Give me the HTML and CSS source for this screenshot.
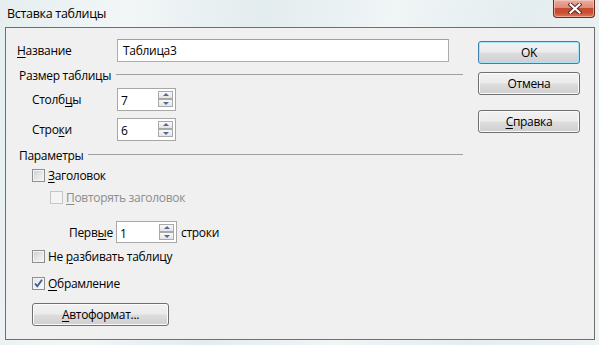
FILE: index.html
```html
<!DOCTYPE html>
<html lang="ru">
<head>
<meta charset="utf-8">
<title>Вставка таблицы</title>
<link rel="stylesheet" href="styles.css">
</head>
<body>
<div class="window">
  <div class="titlebar">
    <span class="title">Вставка таблицы</span>
    <div class="close">
      <svg width="14" height="11" viewBox="0 0 14 11">
        <path d="M2.5 1.5 L11.5 9.5 M11.5 1.5 L2.5 9.5" stroke="#4a2a22" stroke-width="4" stroke-linecap="square" fill="none"/>
        <path d="M2.5 1.5 L11.5 9.5 M11.5 1.5 L2.5 9.5" stroke="#ffffff" stroke-width="2.2" stroke-linecap="square" fill="none"/>
      </svg>
    </div>
  </div>
  <div class="client">
    <div class="main">
      <div class="row name-row">
        <span class="lbl name-lbl"><u>Н</u>азвание</span>
        <div class="textbox">Таблица3</div>
      </div>
      <div class="group-head gh1"><span>Размер таблицы</span><i class="line"></i></div>
      <div class="row spin-row sr1">
        <span class="lbl spin-lbl">Столб<u>ц</u>ы</span>
        <div class="spin"><span class="val">7</span><span class="arrows"><span class="arr up"></span><span class="arr down"></span></span></div>
      </div>
      <div class="row spin-row sr2">
        <span class="lbl spin-lbl">Стро<u>к</u>и</span>
        <div class="spin"><span class="val">6</span><span class="arrows"><span class="arr up"></span><span class="arr down"></span></span></div>
      </div>
      <div class="group-head gh2"><span>Параметры</span><i class="line"></i></div>
      <div class="row check-row cr1">
        <span class="box"></span><span><u>З</u>аголовок</span>
      </div>
      <div class="row check-row cr2 disabled">
        <span class="box"></span><span><u>П</u>овторять заголовок</span>
      </div>
      <div class="row first-row">
        <span class="lbl first-lbl">Перв<u>ы</u>е</span>
        <div class="spin spin-small"><span class="val">1</span><span class="arrows"><span class="arr up"></span><span class="arr down"></span></span></div>
        <span class="lbl">строки</span>
      </div>
      <div class="row check-row cr3">
        <span class="box"></span><span>Не <u>р</u>азбивать таблицу</span>
      </div>
      <div class="row check-row cr4">
        <span class="box checked">
          <svg width="11" height="11" viewBox="0 0 11 11"><path d="M2 5.5 L4.3 8.2 L9 1.8" stroke="#3e5a96" stroke-width="1.8" fill="none"/></svg>
        </span><span><u>О</u>брамление</span>
      </div>
      <div class="btn autofmt"><u>А</u>втоформат...</div>
    </div>
    <div class="buttons">
      <div class="btn default">OK</div>
      <div class="btn cancel">Отмена</div>
      <div class="btn help"><u>С</u>правка</div>
    </div>
  </div>
</div>
</body>
</html>
```

FILE: styles.css
```css
* { box-sizing: border-box; }
html, body {
  margin: 0;
  padding: 0;
  width: 599px;
  height: 345px;
  overflow: hidden;
}
body {
  font-family: "Open Sans", "Noto Sans", sans-serif;
  font-size: 12px;
  letter-spacing: -0.3px;
  color: #000;
  background: linear-gradient(100deg, #e6eef0 0%, #f2f6f7 20%, #e3ecee 40%, #f0f5f6 60%, #e4edef 80%, #eef3f4 100%);
}
.window {
  width: 599px;
  height: 345px;
  display: flex;
  flex-direction: column;
}
.titlebar {
  height: 27px;
  display: flex;
  justify-content: space-between;
  align-items: flex-start;
  padding-left: 7px;
  padding-right: 4px;
}
.title {
  margin-top: 6px;
  line-height: 16px;
  font-size: 12.5px;
  color: #000;
}
.close {
  width: 42px;
  height: 18px;
  border: 1px solid #6b2d22;
  border-top: none;
  border-radius: 0 0 4px 4px;
  background: linear-gradient(#e9ad9f 0%, #dd8c78 45%, #c64a32 50%, #c94f34 75%, #e07a58 100%);
  box-shadow: inset 0 0 0 1px rgba(255, 220, 210, 0.5);
  display: flex;
  align-items: center;
  justify-content: center;
  padding-left: 2px;
}
.close svg { display: block; }
.client {
  margin: 0 4px 0 5px;
  height: 313px;
  border: 1px solid #6f6f6f;
  background: #f0f0f0;
  display: flex;
  padding: 11px 14px 0 11px;
}
.main {
  width: 446px;
  display: flex;
  flex-direction: column;
}
.row {
  display: flex;
  align-items: center;
}
.lbl { white-space: nowrap; }
u { text-decoration: underline; text-underline-offset: 2px; text-decoration-thickness: 1px; }
.name-row { height: 23px; }
.name-lbl { width: 100px; }
.textbox {
  width: 332px;
  height: 23px;
  border: 1px solid #abadb3;
  border-top-color: #a0a0a0;
  background: #fff;
  padding-left: 5px;
  display: flex;
  align-items: center;
}
.group-head {
  height: 16px;
  display: flex;
  align-items: center;
  padding-left: 2px;
}
.group-head .line {
  flex: 1;
  height: 1px;
  margin-left: 5px;
  margin-top: -1px;
  background: #a0a0a0;
}
.gh1 { margin-top: 5px; }
.gh2 { margin-top: 6px; }
.spin-row { height: 23px; padding-left: 15px; }
.sr1 { margin-top: 5px; }
.sr2 { margin-top: 7px; }
.spin-lbl { width: 85px; }
.spin {
  width: 59px;
  height: 23px;
  border: 1px solid #a7a7a7;
  background: #fff;
  display: flex;
  align-items: flex-start;
  justify-content: space-between;
  padding: 2px 2px 0 3px;
}
.spin .val { line-height: 17px; margin-top: 1px; }
.arrows {
  display: flex;
  flex-direction: column;
  width: 15px;
}
.arr {
  display: block;
  height: 8px;
  border: 1px solid #a9a9a9;
  background: linear-gradient(#fafafa, #e4e4e4);
  position: relative;
}
.arr::after {
  content: "";
  position: absolute;
  left: 4px;
  width: 0;
  height: 0;
  border-left: 3px solid transparent;
  border-right: 3px solid transparent;
}
.arr.up::after { top: 1px; border-bottom: 3px solid #4e6a9c; }
.arr.down::after { top: 2px; border-top: 3px solid #4e6a9c; }
.check-row { height: 16px; padding-left: 15px; }
.box {
  width: 13px;
  height: 13px;
  border: 1px solid #8e8f8f;
  background: linear-gradient(135deg, #c9cdd2 0%, #e6e7e9 55%, #f7f7f7 100%);
  box-shadow: inset 0 0 0 1px #f4f4f4;
  margin-right: 3px;
  display: flex;
  align-items: center;
  justify-content: center;
  flex: none;
}
.box.checked { background: linear-gradient(135deg, #dfe3e8 0%, #f2f3f4 60%, #fbfbfb 100%); }
.box svg { display: block; }
.cr1 { margin-top: 4px; }
.cr2 { margin-top: 6px; padding-left: 33px; }
.disabled { color: #8d8d8d; }
.disabled .box { border-color: #c6c6c6; background: #f4f4f4; box-shadow: none; }
.first-row { margin-top: 16px; height: 22px; padding-left: 52px; }
.first-lbl { width: 47px; }
.spin-small { width: 61px; height: 22px; margin-right: 4px; }
.cr3 { margin-top: 5px; }
.cr4 { margin-top: 11px; }
.btn {
  height: 23px;
  border: 1px solid #707070;
  border-radius: 3px;
  background: linear-gradient(#f2f2f2 0%, #ebebeb 48%, #dddddd 52%, #cfcfcf 100%);
  box-shadow: inset 0 0 0 1px #fbfbfb;
  display: flex;
  align-items: center;
  justify-content: center;
  line-height: 16px;
}
.autofmt {
  margin-top: 12px;
  margin-left: 15px;
  width: 137px;
}
.buttons {
  width: 102px;
  margin-left: 15px;
  margin-top: 2px;
  display: flex;
  flex-direction: column;
}
.btn.default {
  border-color: #3c7fb1;
  box-shadow: inset 0 0 0 1px #a6e3f7;
}
.cancel { margin-top: 8px; }
.help { margin-top: 15px; }
```
